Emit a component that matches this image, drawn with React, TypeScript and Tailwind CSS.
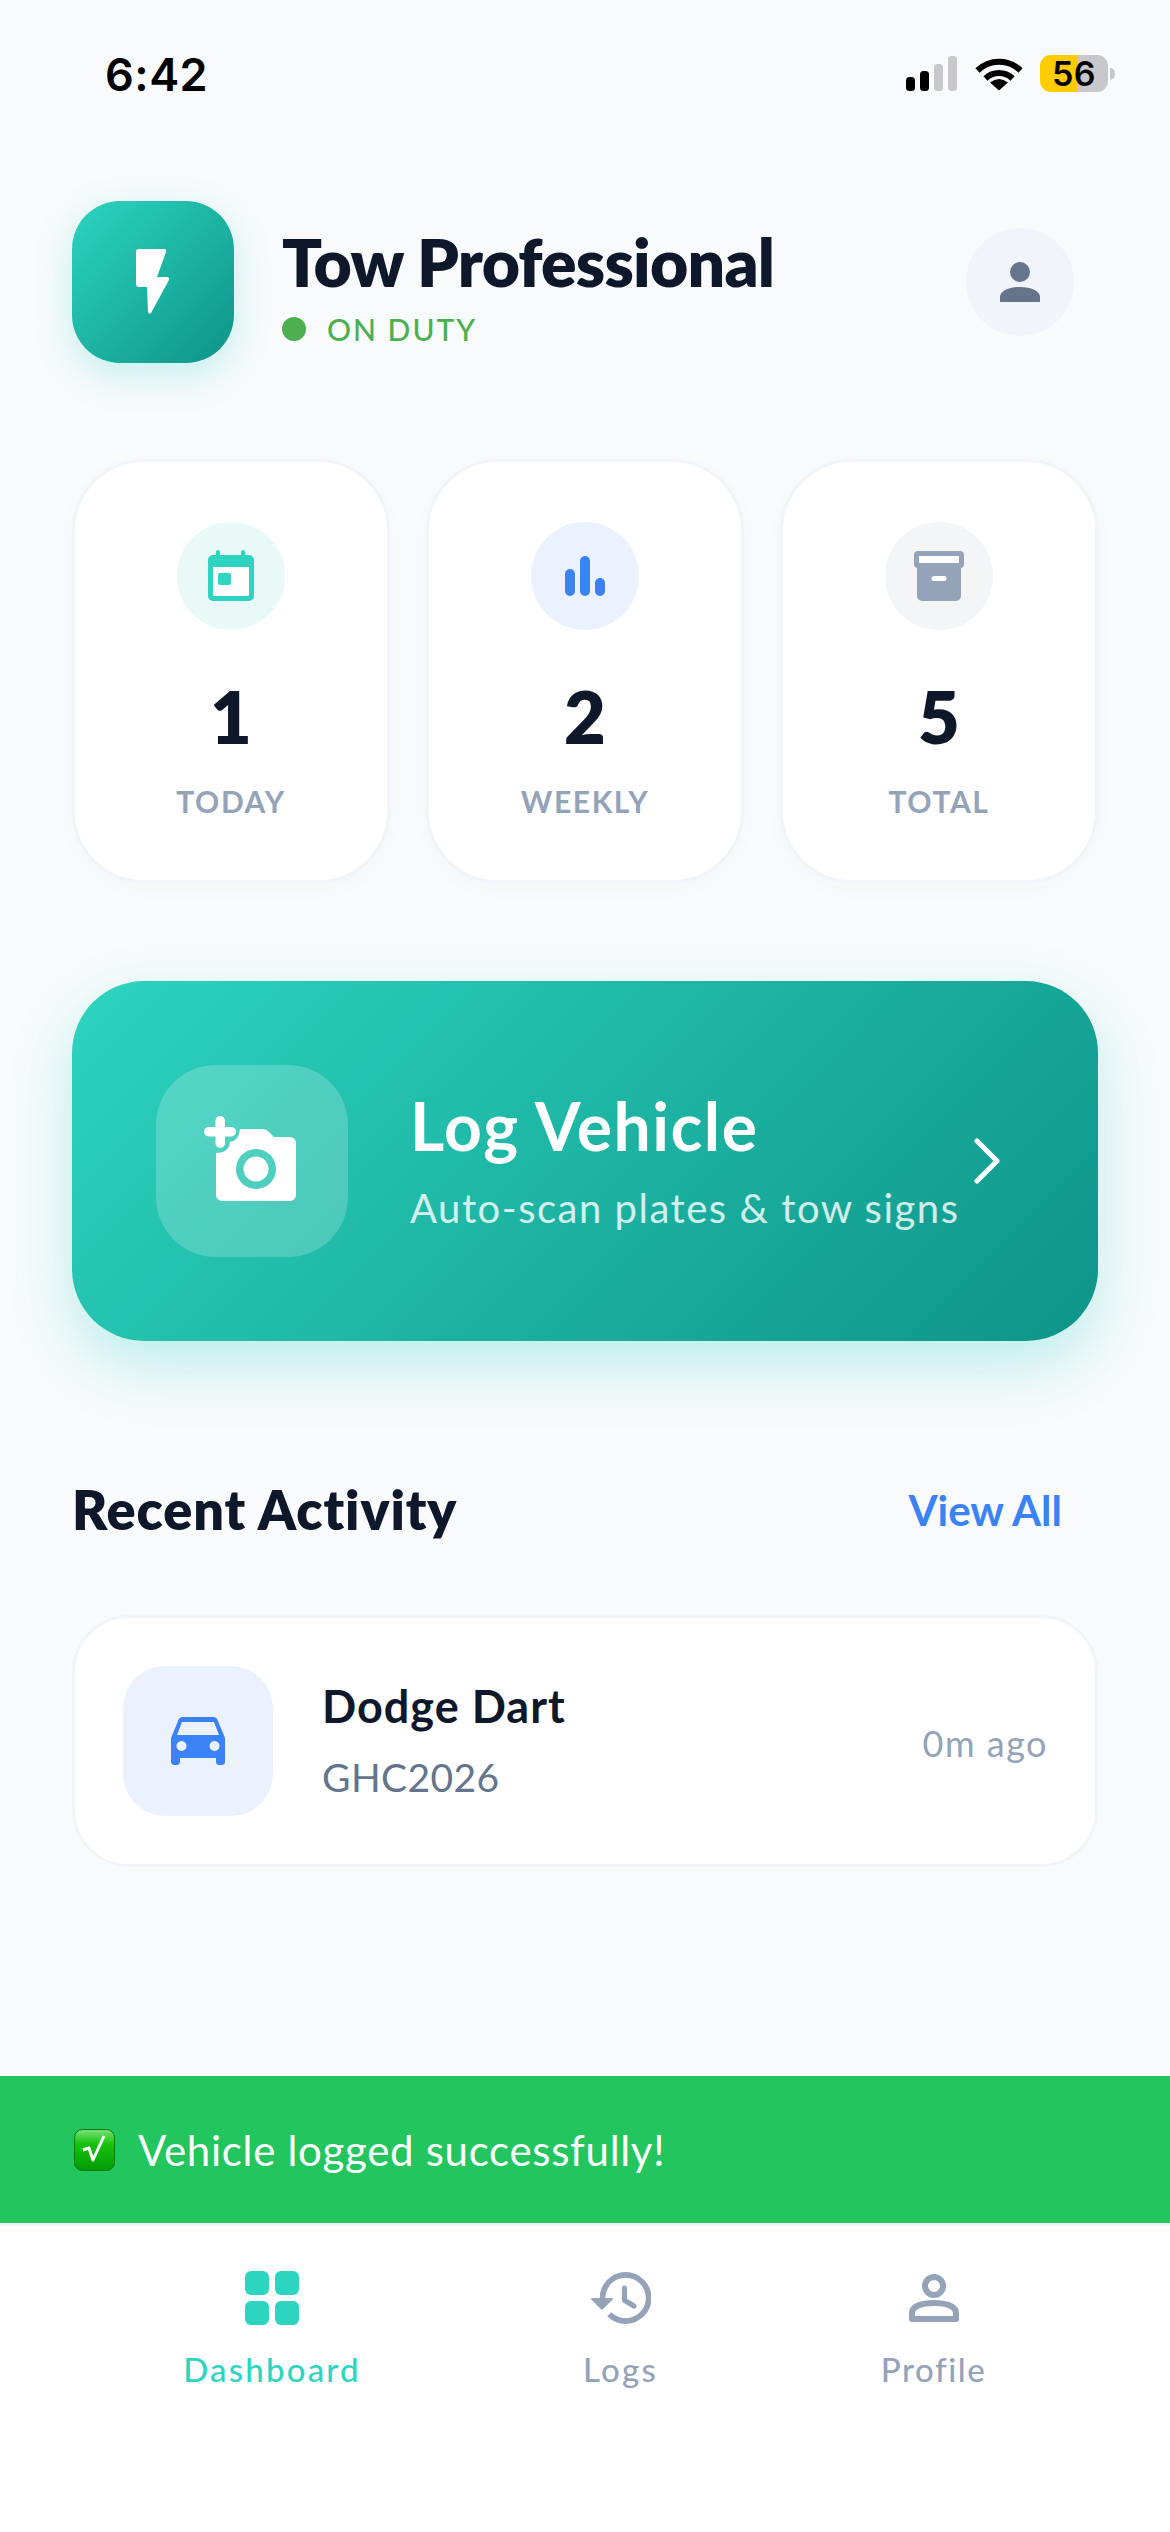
const sans = "font-['Lato','Liberation_Sans',sans-serif]";

function Bolt() {
  return (
    <svg width="34" height="66" viewBox="0 0 34 66" fill="#fff">
      <path d="M3 0H28q3 0 2 3L21 28H31q3 0 2 3L15 64q-2 2-3-1L11 38H3q-3 0-3-3V3q0-3 3-3z" />
    </svg>
  );
}

function Person() {
  return (
    <svg width="40" height="40" viewBox="0 0 40 40" fill="#64748b">
      <circle cx="20" cy="10" r="10" />
      <path d="M0 40V35C0 29 9 25 20 25s20 4 20 10v5z" />
    </svg>
  );
}

function CalendarIcon() {
  return (
    <svg width="46" height="52" viewBox="0 0 46 52" fill="#2dd4bf">
      <rect x="4" y="16" width="38" height="31" fill="#fff" />
      <rect x="8" y="0" width="4" height="9" rx="2" />
      <rect x="33" y="0" width="4" height="9" rx="2" />
      <path fillRule="evenodd" d="M5 5H41a5 5 0 0 1 5 5V46a5 5 0 0 1-5 5H5a5 5 0 0 1-5-5V10a5 5 0 0 1 5-5zM5 17V45a1 1 0 0 0 1 1H40a1 1 0 0 0 1-1V17z" />
      <rect x="10" y="23" width="13" height="12" rx="2.5" />
    </svg>
  );
}

function BarsIcon() {
  return (
    <svg width="40" height="40" viewBox="0 0 40 40" fill="#3b82f6">
      <rect x="0" y="13" width="10" height="27" rx="5" />
      <rect x="15" y="0" width="10" height="40" rx="5" />
      <rect x="30" y="22" width="10" height="18" rx="5" />
    </svg>
  );
}

function ArchiveIcon() {
  return (
    <svg width="50" height="50" viewBox="0 0 50 50" fill="#94a3b8">
      <rect x="4" y="4" width="42" height="9" fill="#fff" />
      <rect x="17" y="24" width="16" height="7" rx="3" fill="#fff" />
      <path fillRule="evenodd" d="M4 0H46a4 4 0 0 1 4 4V13a4 4 0 0 1-4 4H4a4 4 0 0 1-4-4V4a4 4 0 0 1 4-4zM5 5V12H45V5z" />
      <path fillRule="evenodd" d="M3 17H47V45a5 5 0 0 1-5 5H8a5 5 0 0 1-5-5zM20 25a2.5 2.5 0 0 0 0 5H30a2.5 2.5 0 0 0 0-5z" />
    </svg>
  );
}

function CameraPlus() {
  return (
    <svg width="96" height="96" viewBox="0 0 96 96" fill="#fff">
      <rect x="0" y="14" width="32" height="9.5" rx="4.75" />
      <rect x="11.5" y="3" width="9.5" height="32" rx="4.75" />
      <path fillRule="evenodd" d="M36 16H58q4 0 7 3l5 5H86a6 6 0 0 1 6 6V82a6 6 0 0 1-6 6H18a6 6 0 0 1-6-6V40q13 0 14-11 9-1 10-13zM52 36a20 20 0 1 0 0.01 0z" />
      <circle cx="52" cy="56" r="12.5" />
    </svg>
  );
}

function Chevron() {
  return (
    <svg width="26" height="46" viewBox="0 0 26 46" fill="none" stroke="#fff" strokeWidth="5" strokeLinecap="round" strokeLinejoin="round">
      <path d="M3 3L23 23L3 43" />
    </svg>
  );
}

function CarIcon() {
  return (
    <svg width="54" height="48" viewBox="0 0 54 48" fill="#3b82f6">
      <path fillRule="evenodd" d="M12 0H42q4 0 5 4L54 21V41H0V21L7 4q1-4 5-4zM11 5L6 18H48L43 5zM10.5 24a5 5 0 1 0 0.01 0zM43.5 24a5 5 0 1 0 0.01 0z" />
      <rect x="0" y="37" width="9" height="11" rx="3.5" />
      <rect x="45" y="37" width="9" height="11" rx="3.5" />
    </svg>
  );
}

function GridIcon() {
  return (
    <svg width="54" height="54" viewBox="0 0 54 54" fill="#2dd4bf">
      <rect x="0" y="0" width="24" height="24" rx="6" />
      <rect x="30" y="0" width="24" height="24" rx="6" />
      <rect x="0" y="30" width="24" height="24" rx="6" />
      <rect x="30" y="30" width="24" height="24" rx="6" />
    </svg>
  );
}

function HistoryIcon() {
  return (
    <svg width="60" height="54" viewBox="1 3 20.8 18" fill="none">
      <path fill="#94a3b8" d="M13 3a9 9 0 0 0-9 9H1.3c-.3 0-.4.3-.2.5l3.4 3.4c.2.2.4.2.6 0l3.4-3.4c.2-.2.1-.5-.2-.5H6c0-3.87 3.13-7 7-7s7 3.13 7 7-3.13 7-7 7c-1.93 0-3.68-.79-4.94-2.06l-1.42 1.42A8.954 8.954 0 0 0 13 21a9 9 0 0 0 0-18z" />
      <path stroke="#94a3b8" strokeWidth="1.8" strokeLinecap="round" strokeLinejoin="round" d="M12.6 8.6v4.2l3.3 2" />
    </svg>
  );
}

function ProfileIcon() {
  return (
    <svg width="50" height="48" viewBox="0 0 50 48" fill="none" stroke="#94a3b8" strokeWidth="6">
      <circle cx="25" cy="12" r="9" />
      <path d="M3 45V39C3 32 13 29 25 29s22 3 22 10v6z" strokeLinejoin="round" />
    </svg>
  );
}

function CheckEmoji() {
  return (
    <svg width="41" height="42" viewBox="0 0 41 42" className="shrink-0">
      <defs>
        <linearGradient id="emojiGreen" x1="0" y1="0" x2="0" y2="1">
          <stop offset="0" stopColor="#7fe07a" />
          <stop offset="0.35" stopColor="#17c20f" />
          <stop offset="1" stopColor="#049a04" />
        </linearGradient>
      </defs>
      <rect x="0.5" y="0.5" width="40" height="41" rx="8" fill="url(#emojiGreen)" stroke="#067a10" />
      <path d="M9 21L15 19L19 31L30 7" fill="none" stroke="#fff" strokeWidth="3" strokeLinejoin="round" />
    </svg>
  );
}

function Stat({ icon, bg, value, label }: { icon: React.ReactNode; bg: string; value: string; label: string }) {
  return (
    <div className="flex h-[424px] flex-col items-center rounded-[72px] border-[3px] border-[#f1f5f9] bg-white pt-[60px] shadow-[0_6px_24px_rgba(15,23,42,0.02)]">
      <div className={`flex h-[108px] w-[108px] items-center justify-center rounded-full ${bg}`}>{icon}</div>
      <div className="mt-[46px] text-[72px] leading-[80px] font-extrabold text-[#0f172a]">{value}</div>
      <div className="mt-[27px] text-[30px] leading-[36px] font-bold tracking-[1.6px] text-[#94a3b8]">{label}</div>
    </div>
  );
}

function NavItem({ icon, label, width, color, tracking }: { icon: React.ReactNode; label: string; width: string; color: string; tracking: string }) {
  return (
    <div className={`flex flex-col items-center ${width}`}>
      <div className="flex h-[54px] items-center justify-center">{icon}</div>
      <div className={`mt-[24px] text-[33px] leading-[40px] font-medium whitespace-nowrap ${tracking} ${color}`}>{label}</div>
    </div>
  );
}

export default function App() {
  return (
    <div className={`flex min-h-[2532px] w-[1170px] flex-col bg-[#f8fafc] ${sans}`}>
      <div className="flex flex-1 flex-col px-[72px]">
        {/* status bar */}
        <div className="-mx-[72px] flex h-[148px] items-start justify-between pt-[48px] pr-[55px] pl-[105px]">
          <div className="font-['Inter',sans-serif] text-[45px] leading-[54px] font-semibold tracking-[0.5px] text-black">6:42</div>
          <div className="flex items-center pt-[7px]">
            <svg width="52" height="35" viewBox="0 0 52 35">
              <rect x="0" y="21" width="9" height="14" rx="3.5" fill="#000" />
              <rect x="14" y="15" width="9" height="20" rx="3.5" fill="#000" />
              <rect x="28" y="8" width="9" height="27" rx="3.5" fill="#c7c7cc" />
              <rect x="42" y="0" width="9" height="35" rx="3.5" fill="#c7c7cc" />
            </svg>
            <svg width="48" height="34" viewBox="0 0 48 34" className="ml-[17px]" fill="none" stroke="#000" strokeWidth="6">
              <path d="M2.5 13.5A31 31 0 0 1 45.5 13.5" />
              <path d="M10.5 21.5A19.5 19.5 0 0 1 37.5 21.5" />
              <path d="M24 33.5L15 25.5Q24 18.5 33 25.5Z" fill="#000" stroke="none" />
            </svg>
            <div className="ml-[17px] flex h-[37px] w-[68px] items-center justify-center rounded-[11px] bg-[linear-gradient(to_right,#ffcc00_56%,#c8c8cc_56%)] font-['Inter',sans-serif] text-[34px] leading-none font-semibold tracking-[0.5px] text-black">
              56
            </div>
            <div className="ml-[2px] h-[12px] w-[5px] rounded-r-full bg-[#c8c8cc]" />
          </div>
        </div>

        {/* header */}
        <div className="mt-[53px] flex h-[162px] items-center">
          <div className="flex h-[162px] w-[162px] shrink-0 items-center justify-center rounded-[48px] bg-[linear-gradient(135deg,#2dd4bf,#0d9488)] shadow-[0_12px_36px_rgba(45,212,191,0.25)]">
            <Bolt />
          </div>
          <div className="ml-[48px] flex-1 pt-[7px]">
            <div className="text-[66px] leading-[76px] font-extrabold tracking-[-0.75px] text-[#0f172a]">Tow Professional</div>
            <div className="mt-[11px] flex items-center">
              <div className="h-[24px] w-[24px] rounded-full bg-[#4caf50]" />
              <div className="ml-[21px] text-[30px] leading-[36px] font-medium tracking-[2px] text-[#4caf50]">ON DUTY</div>
            </div>
          </div>
          <div className="mr-[24px] flex h-[108px] w-[108px] items-center justify-center rounded-full bg-[#f1f5f9]">
            <Person />
          </div>
        </div>

        {/* stats */}
        <div className="mt-[96px] grid grid-cols-3 gap-[36px]">
          <Stat icon={<CalendarIcon />} bg="bg-[#e8f9f7]" value="1" label="TODAY" />
          <Stat icon={<BarsIcon />} bg="bg-[#ebf2fe]" value="2" label="WEEKLY" />
          <Stat icon={<ArchiveIcon />} bg="bg-[#f4f5f7]" value="5" label="TOTAL" />
        </div>

        {/* log vehicle */}
        <div className="mt-[98px] flex h-[360px] items-center rounded-[72px] bg-[linear-gradient(135deg,#2dd4bf,#0d9488)] pl-[84px] shadow-[0_24px_60px_rgba(45,212,191,0.3)]">
          <div className="flex h-[192px] w-[192px] shrink-0 items-center justify-center rounded-[60px] bg-white/20">
            <CameraPlus />
          </div>
          <div className="ml-[62px] w-[564px]">
            <div className="-mt-[2px] text-[66px] leading-[76px] font-bold tracking-[1.5px] text-white">Log Vehicle</div>
            <div className="mt-[20px] text-[40px] leading-[48px] tracking-[1.5px] whitespace-nowrap text-white/80">Auto-scan plates &amp; tow signs</div>
          </div>
          <Chevron />
        </div>

        {/* recent header */}
        <div className="mt-[135px] flex h-[68px] items-center justify-between pr-[36px]">
          <div className="text-[54px] leading-[68px] font-extrabold tracking-[0.9px] text-[#0f172a]">Recent Activity</div>
          <div className="text-[42px] leading-[50px] font-bold text-[#3b82f6]">View All</div>
        </div>

        {/* activity card */}
        <div className="mt-[71px] flex h-[252px] items-center rounded-[57px] border-[3px] border-[#f1f5f9] bg-white pr-[47px] pl-[48px]">
          <div className="flex h-[150px] w-[150px] shrink-0 items-center justify-center rounded-[42px] bg-[#ebf2fe]">
            <CarIcon />
          </div>
          <div className="ml-[49px] flex-1">
            <div className="-mt-[3px] text-[45px] leading-[54px] font-bold tracking-[1px] text-[#0f172a]">Dodge Dart</div>
            <div className="mt-[21px] text-[39px] leading-[46px] tracking-[0.4px] text-[#64748b]">GHC2026</div>
          </div>
          <div className="mt-[3px] text-[36px] leading-[44px] tracking-[1.5px] text-[#94a3b8]">0m ago</div>
        </div>
      </div>

      {/* toast */}
      <div className="flex h-[147px] items-center bg-[#22c55e] pl-[74px]">
        <CheckEmoji />
        <div className="ml-[23px] text-[42px] leading-[50px] tracking-[0.7px] text-white">Vehicle logged successfully!</div>
      </div>

      {/* nav */}
      <div className="flex h-[309px] items-start justify-around border-t-[3px] border-[#f1f5f9] bg-white px-[72px] pt-[45px]">
        <NavItem icon={<GridIcon />} label="Dashboard" width="w-[176px]" color="text-[#2dd4bf]" tracking="tracking-[2.2px]" />
        <NavItem icon={<HistoryIcon />} label="Logs" width="w-[73px]" color="text-[#94a3b8]" tracking="tracking-[2.2px]" />
        <NavItem icon={<ProfileIcon />} label="Profile" width="w-[105px]" color="text-[#94a3b8]" tracking="tracking-[1.6px]" />
      </div>
    </div>
  );
}
